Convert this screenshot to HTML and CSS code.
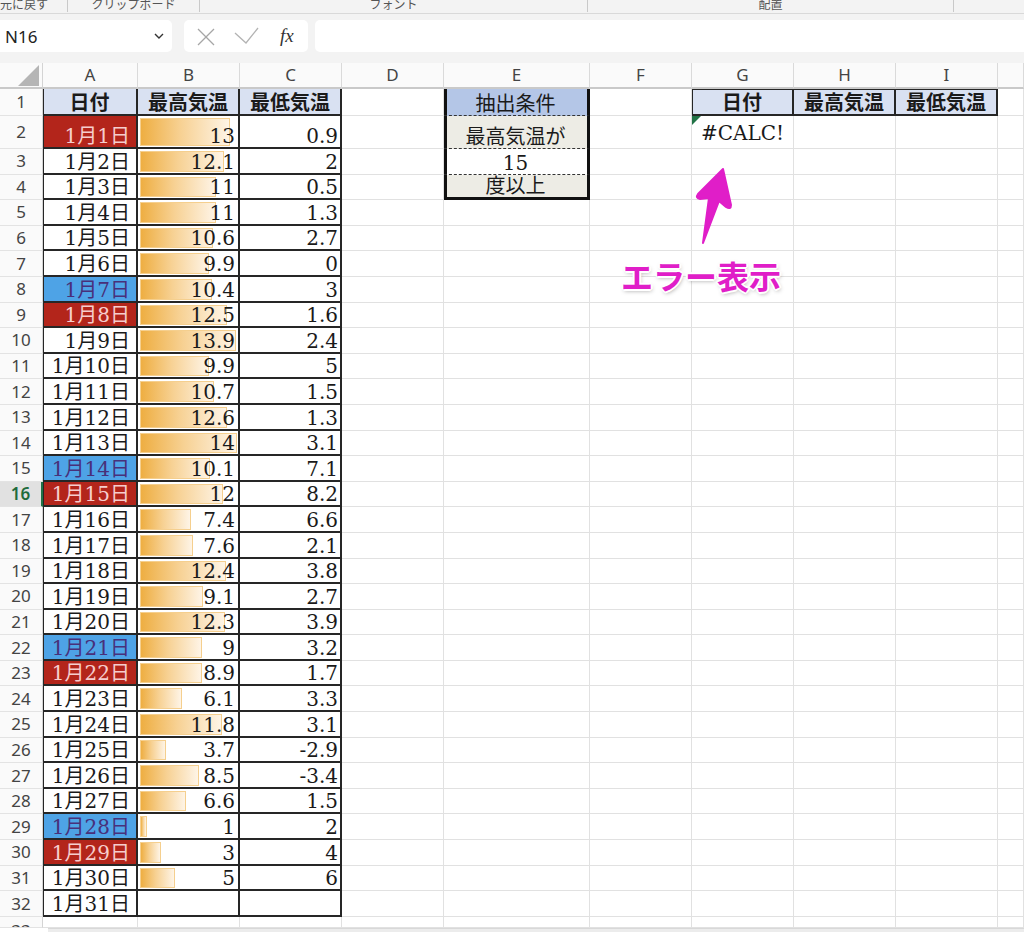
FILE: index.html
```html
<!DOCTYPE html>
<html lang="ja">
<head>
    <meta charset="UTF-8">
    <title>最高気温 抽出</title>
    <link rel="stylesheet" href="styles.css">
</head>
<body>
    <!-- リボンの下端 -->
    <div class="ribbon">
        <div class="grp g1"><span>元に戻す</span></div>
        <div class="grp g2"><span>クリップボード</span></div>
        <div class="grp g3"><span>フォント</span></div>
        <div class="grp g4"><span>配置</span></div>
        <div class="grp g5"></div>
    </div>

    <!-- 数式バー -->
    <div class="fbar">
        <div class="namebox">
            <span>N16</span>
            <svg width="10" height="6" viewBox="0 0 10 6"><polyline points="1,1 5,5 9,1" fill="none" stroke="#333" stroke-width="1.4"/></svg>
        </div>
        <div class="fxbox">
            <svg width="80" height="32" viewBox="0 0 80 32">
                <line x1="14" y1="9" x2="30" y2="25" stroke="#a6a6a6" stroke-width="1.3"/>
                <line x1="30" y1="9" x2="14" y2="25" stroke="#a6a6a6" stroke-width="1.3"/>
                <polyline points="51,13 62,23 74,8" fill="none" stroke="#b3b3b3" stroke-width="1.3"/>
            </svg>
            <span class="fx">fx</span>
        </div>
        <div class="finput"></div>
    </div>

    <!-- シート -->
    <div class="sheet">
        <div class="corner"><span class="tri"></span></div>
        <div class="ch">A</div><div class="ch">B</div><div class="ch">C</div><div class="ch">D</div><div class="ch">E</div><div class="ch">F</div><div class="ch">G</div><div class="ch">H</div><div class="ch">I</div><div class="ch"></div>

        <div class="rh">1</div>
        <div class="c t a hd">日付</div><div class="c t hd">最高気温</div><div class="c t hd">最低気温</div><div class="c"></div>
        <div class="c ex ex1">抽出条件</div><div class="c"></div>
        <div class="c gh gfirst">日付</div><div class="c gh">最高気温</div><div class="c gh">最低気温</div><div class="c"></div>

        <div class="rh">2</div>
        <div class="c t a red">1月1日</div><div class="c t b"><span class="bar" style="width:90px"></span><span class="v">13</span></div><div class="c t n">0.9</div><div class="c"></div>
        <div class="c ex ex2">最高気温が</div><div class="c"></div>
        <div class="c err">#CALC!</div><div class="c"></div><div class="c"></div><div class="c"></div>

        <div class="rh">3</div>
        <div class="c t a">1月2日</div><div class="c t b"><span class="bar" style="width:84px"></span><span class="v">12.1</span></div><div class="c t n">2</div><div class="c"></div>
        <div class="c ex ex3">15</div><div class="c"></div>
        <div class="c"></div><div class="c"></div><div class="c"></div><div class="c"></div>

        <div class="rh">4</div>
        <div class="c t a">1月3日</div><div class="c t b"><span class="bar" style="width:76px"></span><span class="v">11</span></div><div class="c t n">0.5</div><div class="c"></div>
        <div class="c ex ex4">度以上</div><div class="c"></div>
        <div class="c"></div><div class="c"></div><div class="c"></div><div class="c"></div>

        <div class="rh">5</div>
        <div class="c t a">1月4日</div><div class="c t b"><span class="bar" style="width:76px"></span><span class="v">11</span></div><div class="c t n">1.3</div>
        <div class="c"></div><div class="c"></div><div class="c"></div><div class="c"></div><div class="c"></div><div class="c"></div><div class="c"></div>

        <div class="rh">6</div>
        <div class="c t a">1月5日</div><div class="c t b"><span class="bar" style="width:73px"></span><span class="v">10.6</span></div><div class="c t n">2.7</div>
        <div class="c"></div><div class="c"></div><div class="c"></div><div class="c"></div><div class="c"></div><div class="c"></div><div class="c"></div>

        <div class="rh">7</div>
        <div class="c t a">1月6日</div><div class="c t b"><span class="bar" style="width:69px"></span><span class="v">9.9</span></div><div class="c t n">0</div>
        <div class="c"></div><div class="c"></div><div class="c"></div><div class="c"></div><div class="c"></div><div class="c"></div><div class="c"></div>

        <div class="rh">8</div>
        <div class="c t a blue">1月7日</div><div class="c t b"><span class="bar" style="width:72px"></span><span class="v">10.4</span></div><div class="c t n">3</div>
        <div class="c"></div><div class="c"></div><div class="c"></div><div class="c"></div><div class="c"></div><div class="c"></div><div class="c"></div>

        <div class="rh">9</div>
        <div class="c t a red">1月8日</div><div class="c t b"><span class="bar" style="width:87px"></span><span class="v">12.5</span></div><div class="c t n">1.6</div>
        <div class="c"></div><div class="c"></div><div class="c"></div><div class="c"></div><div class="c"></div><div class="c"></div><div class="c"></div>

        <div class="rh">10</div>
        <div class="c t a">1月9日</div><div class="c t b"><span class="bar" style="width:96px"></span><span class="v">13.9</span></div><div class="c t n">2.4</div>
        <div class="c"></div><div class="c"></div><div class="c"></div><div class="c"></div><div class="c"></div><div class="c"></div><div class="c"></div>

        <div class="rh">11</div>
        <div class="c t a">1月10日</div><div class="c t b"><span class="bar" style="width:69px"></span><span class="v">9.9</span></div><div class="c t n">5</div>
        <div class="c"></div><div class="c"></div><div class="c"></div><div class="c"></div><div class="c"></div><div class="c"></div><div class="c"></div>

        <div class="rh">12</div>
        <div class="c t a">1月11日</div><div class="c t b"><span class="bar" style="width:74px"></span><span class="v">10.7</span></div><div class="c t n">1.5</div>
        <div class="c"></div><div class="c"></div><div class="c"></div><div class="c"></div><div class="c"></div><div class="c"></div><div class="c"></div>

        <div class="rh">13</div>
        <div class="c t a">1月12日</div><div class="c t b"><span class="bar" style="width:87px"></span><span class="v">12.6</span></div><div class="c t n">1.3</div>
        <div class="c"></div><div class="c"></div><div class="c"></div><div class="c"></div><div class="c"></div><div class="c"></div><div class="c"></div>

        <div class="rh">14</div>
        <div class="c t a">1月13日</div><div class="c t b"><span class="bar" style="width:97px"></span><span class="v">14</span></div><div class="c t n">3.1</div>
        <div class="c"></div><div class="c"></div><div class="c"></div><div class="c"></div><div class="c"></div><div class="c"></div><div class="c"></div>

        <div class="rh">15</div>
        <div class="c t a blue">1月14日</div><div class="c t b"><span class="bar" style="width:70px"></span><span class="v">10.1</span></div><div class="c t n">7.1</div>
        <div class="c"></div><div class="c"></div><div class="c"></div><div class="c"></div><div class="c"></div><div class="c"></div><div class="c"></div>

        <div class="rh sel">16</div>
        <div class="c t a red">1月15日</div><div class="c t b"><span class="bar" style="width:83px"></span><span class="v">12</span></div><div class="c t n">8.2</div>
        <div class="c"></div><div class="c"></div><div class="c"></div><div class="c"></div><div class="c"></div><div class="c"></div><div class="c"></div>

        <div class="rh">17</div>
        <div class="c t a">1月16日</div><div class="c t b"><span class="bar" style="width:51px"></span><span class="v">7.4</span></div><div class="c t n">6.6</div>
        <div class="c"></div><div class="c"></div><div class="c"></div><div class="c"></div><div class="c"></div><div class="c"></div><div class="c"></div>

        <div class="rh">18</div>
        <div class="c t a">1月17日</div><div class="c t b"><span class="bar" style="width:53px"></span><span class="v">7.6</span></div><div class="c t n">2.1</div>
        <div class="c"></div><div class="c"></div><div class="c"></div><div class="c"></div><div class="c"></div><div class="c"></div><div class="c"></div>

        <div class="rh">19</div>
        <div class="c t a">1月18日</div><div class="c t b"><span class="bar" style="width:86px"></span><span class="v">12.4</span></div><div class="c t n">3.8</div>
        <div class="c"></div><div class="c"></div><div class="c"></div><div class="c"></div><div class="c"></div><div class="c"></div><div class="c"></div>

        <div class="rh">20</div>
        <div class="c t a">1月19日</div><div class="c t b"><span class="bar" style="width:63px"></span><span class="v">9.1</span></div><div class="c t n">2.7</div>
        <div class="c"></div><div class="c"></div><div class="c"></div><div class="c"></div><div class="c"></div><div class="c"></div><div class="c"></div>

        <div class="rh">21</div>
        <div class="c t a">1月20日</div><div class="c t b"><span class="bar" style="width:85px"></span><span class="v">12.3</span></div><div class="c t n">3.9</div>
        <div class="c"></div><div class="c"></div><div class="c"></div><div class="c"></div><div class="c"></div><div class="c"></div><div class="c"></div>

        <div class="rh">22</div>
        <div class="c t a blue">1月21日</div><div class="c t b"><span class="bar" style="width:62px"></span><span class="v">9</span></div><div class="c t n">3.2</div>
        <div class="c"></div><div class="c"></div><div class="c"></div><div class="c"></div><div class="c"></div><div class="c"></div><div class="c"></div>

        <div class="rh">23</div>
        <div class="c t a red">1月22日</div><div class="c t b"><span class="bar" style="width:62px"></span><span class="v">8.9</span></div><div class="c t n">1.7</div>
        <div class="c"></div><div class="c"></div><div class="c"></div><div class="c"></div><div class="c"></div><div class="c"></div><div class="c"></div>

        <div class="rh">24</div>
        <div class="c t a">1月23日</div><div class="c t b"><span class="bar" style="width:42px"></span><span class="v">6.1</span></div><div class="c t n">3.3</div>
        <div class="c"></div><div class="c"></div><div class="c"></div><div class="c"></div><div class="c"></div><div class="c"></div><div class="c"></div>

        <div class="rh">25</div>
        <div class="c t a">1月24日</div><div class="c t b"><span class="bar" style="width:82px"></span><span class="v">11.8</span></div><div class="c t n">3.1</div>
        <div class="c"></div><div class="c"></div><div class="c"></div><div class="c"></div><div class="c"></div><div class="c"></div><div class="c"></div>

        <div class="rh">26</div>
        <div class="c t a">1月25日</div><div class="c t b"><span class="bar" style="width:26px"></span><span class="v">3.7</span></div><div class="c t n">-2.9</div>
        <div class="c"></div><div class="c"></div><div class="c"></div><div class="c"></div><div class="c"></div><div class="c"></div><div class="c"></div>

        <div class="rh">27</div>
        <div class="c t a">1月26日</div><div class="c t b"><span class="bar" style="width:59px"></span><span class="v">8.5</span></div><div class="c t n">-3.4</div>
        <div class="c"></div><div class="c"></div><div class="c"></div><div class="c"></div><div class="c"></div><div class="c"></div><div class="c"></div>

        <div class="rh">28</div>
        <div class="c t a">1月27日</div><div class="c t b"><span class="bar" style="width:46px"></span><span class="v">6.6</span></div><div class="c t n">1.5</div>
        <div class="c"></div><div class="c"></div><div class="c"></div><div class="c"></div><div class="c"></div><div class="c"></div><div class="c"></div>

        <div class="rh">29</div>
        <div class="c t a blue">1月28日</div><div class="c t b"><span class="bar" style="width:7px"></span><span class="v">1</span></div><div class="c t n">2</div>
        <div class="c"></div><div class="c"></div><div class="c"></div><div class="c"></div><div class="c"></div><div class="c"></div><div class="c"></div>

        <div class="rh">30</div>
        <div class="c t a red">1月29日</div><div class="c t b"><span class="bar" style="width:21px"></span><span class="v">3</span></div><div class="c t n">4</div>
        <div class="c"></div><div class="c"></div><div class="c"></div><div class="c"></div><div class="c"></div><div class="c"></div><div class="c"></div>

        <div class="rh">31</div>
        <div class="c t a">1月30日</div><div class="c t b"><span class="bar" style="width:35px"></span><span class="v">5</span></div><div class="c t n">6</div>
        <div class="c"></div><div class="c"></div><div class="c"></div><div class="c"></div><div class="c"></div><div class="c"></div><div class="c"></div>

        <div class="rh">32</div>
        <div class="c t a">1月31日</div><div class="c t b"></div><div class="c t n"></div>
        <div class="c"></div><div class="c"></div><div class="c"></div><div class="c"></div><div class="c"></div><div class="c"></div><div class="c"></div>

        <div class="rh last">33</div>
        <div class="c"></div><div class="c"></div><div class="c"></div><div class="c"></div><div class="c"></div><div class="c"></div><div class="c"></div><div class="c"></div><div class="c"></div><div class="c"></div>
    </div>
    <div class="hscroll"></div>

    <!-- 注釈 -->
    <svg class="arrow" width="60" height="90" viewBox="680 160 60 90">
        <path d="M723,169 L731,205 Q731,210 726,207 L719,201 L703,243 L709,198 L700,199 Q695,198 698,194 Z" fill="#e01ec8" stroke="#e01ec8" stroke-width="2" stroke-linejoin="round"/>
    </svg>
    <div class="note">エラー表示</div>
</body>
</html>
```

FILE: styles.css
```css
* {
    margin: 0;
    padding: 0;
    box-sizing: border-box;
}

body {
    width: 1024px;
    height: 932px;
    overflow: hidden;
    position: relative;
    background: #fff;
    font-family: "Noto Sans", "Noto Sans CJK JP", sans-serif;
    color: #222;
}

/* リボン */
.ribbon {
    height: 14px;
    display: flex;
    overflow: hidden;
    background: #f3f3f3;
    border-bottom: 1px solid #d9d9d9;
}

.grp {
    height: 12px;
    display: flex;
    align-items: flex-end;
    justify-content: center;
    border-right: 1px solid #c9c9c9;
    font-size: 12px;
    line-height: 15px;
    color: #555;
    white-space: nowrap;
}

.g1 { width: 68px; justify-content: flex-start; }
.g2 { width: 132px; }
.g3 { width: 388px; }
.g4 { width: 366px; }
.g5 { flex: 1; border-right: none; }

/* 数式バー */
.fbar {
    height: 49px;
    display: flex;
    padding: 6px 0 11px;
    background: #f3f3f3;
}

.namebox {
    width: 172px;
    display: flex;
    align-items: center;
    justify-content: space-between;
    padding: 0 8px 0 5px;
    background: #fff;
    border-radius: 0 5px 5px 0;
    font-size: 17px;
    color: #222;
}

.fxbox {
    width: 124px;
    margin-left: 12px;
    display: flex;
    align-items: center;
    background: #fff;
    border-radius: 5px;
}

.fx {
    margin-left: 16px;
    font-family: "Liberation Serif", serif;
    font-style: italic;
    font-size: 19px;
    color: #333;
}

.finput {
    flex: 1;
    margin-left: 7px;
    background: #fff;
    border-radius: 5px 0 0 5px;
}

/* シート */
.sheet {
    display: grid;
    grid-template-columns: 43px 95px 102px 102px 102px 146px 102px 102px 102px 102px 1fr;
    grid-template-rows: 26px 27px 33px repeat(30, 25.6px) 11px;
    font-family: "DejaVu Serif", "Noto Sans CJK JP", serif;
    font-size: 20px;
    line-height: 22px;
    color: #1a1a1a;
}

.corner {
    display: flex;
    align-items: flex-end;
    justify-content: flex-end;
    padding: 0 3px 1px 0;
    background: #fafafa;
    border-right: 1px solid #d4d4d4;
    border-bottom: 2px solid #c9c9c9;
}

.tri {
    width: 0;
    height: 0;
    border-left: 21px solid transparent;
    border-bottom: 21px solid #b5b5b5;
}

.ch {
    display: flex;
    align-items: center;
    justify-content: center;
    background: #fafafa;
    border-right: 1px solid #dadada;
    border-bottom: 2px solid #c9c9c9;
    font-family: "Noto Sans", sans-serif;
    font-size: 17px;
    color: #444;
}

.rh {
    display: flex;
    align-items: center;
    justify-content: center;
    overflow: hidden;
    background: #fafafa;
    border-right: 1px solid #d4d4d4;
    border-bottom: 1px solid #e3e3e3;
    font-family: "Noto Sans", sans-serif;
    font-size: 17px;
    color: #444;
}

.rh.sel {
    background: #e1e1e1;
    color: #1e6b3c;
    font-weight: 600;
    border-right: 2px solid #217346;
}

.rh.last {
    align-items: flex-start;
    padding-top: 3px;
}

.c {
    position: relative;
    display: flex;
    align-items: flex-end;
    overflow: hidden;
    white-space: nowrap;
    border-right: 1px solid #e1e1e1;
    border-bottom: 1px solid #e1e1e1;
}

/* 表 A:C */
.t {
    border-right: 2px solid #262626;
    border-bottom: 2px solid #262626;
}

.a {
    justify-content: flex-end;
    padding-right: 6px;
    box-shadow: inset 1px 0 0 #262626;
}

.n {
    justify-content: flex-end;
    padding-right: 2px;
}

.b {
    justify-content: flex-end;
    padding-right: 3px;
}

.hd {
    justify-content: center;
    padding-right: 0;
    background: #d9e1f2;
    font-weight: bold;
}

.red {
    background: #b3251b;
    color: #f6cdcd;
}

.blue {
    background: #4ea3e6;
    color: #48307a;
}

/* データバー */
.bar {
    position: absolute;
    left: 2px;
    top: 2px;
    bottom: 1px;
    background: linear-gradient(to right, #eeae42, #f7d193 45%, #fef4e6);
    border: 1px solid #f5cf8e;
}

.v {
    position: relative;
}

/* 抽出条件 */
.ex {
    justify-content: center;
    border-right: 3px solid #111;
    border-bottom: 1px dashed #333;
    box-shadow: inset 3px 0 0 #111;
}

.ex1 { background: #b4c6e7; }
.ex2 { background: #edece5; }
.ex3 { background: #fff; }
.ex4 {
    background: #edece5;
    border-bottom: 3px solid #111;
}

/* 抽出結果 */
.gh {
    justify-content: center;
    background: #d9e1f2;
    font-weight: bold;
    border-right: 2px solid #262626;
    border-bottom: 2px solid #262626;
    box-shadow: inset 0 1px 0 #262626;
}

.gfirst {
    box-shadow: inset 0 1px 0 #262626, inset 1px 0 0 #262626;
}

.err {
    justify-content: center;
    padding-bottom: 4px;
}

.err::before {
    content: "";
    position: absolute;
    left: 0;
    top: 0;
    border-top: 9px solid #217346;
    border-right: 9px solid transparent;
}

.hscroll {
    height: 4px;
    margin-left: 48px;
    background: #ececec;
    border-top: 1px solid #d8d8d8;
}

/* 注釈 */
.arrow {
    position: absolute;
    left: 680px;
    top: 160px;
}

.note {
    position: absolute;
    left: 621px;
    top: 259px;
    font-family: "Noto Sans CJK JP", sans-serif;
    font-size: 32px;
    font-weight: bold;
    line-height: 32px;
    color: #e01ec8;
    text-shadow: -2px 0 0 #fff, 2px 0 0 #fff, 0 -2px 0 #fff, 0 2px 0 #fff,
        -1px -1px 0 #fff, 1px 1px 0 #fff, -1px 1px 0 #fff, 1px -1px 0 #fff,
        1px 2px 4px rgba(0, 0, 0, 0.35);
}
```
